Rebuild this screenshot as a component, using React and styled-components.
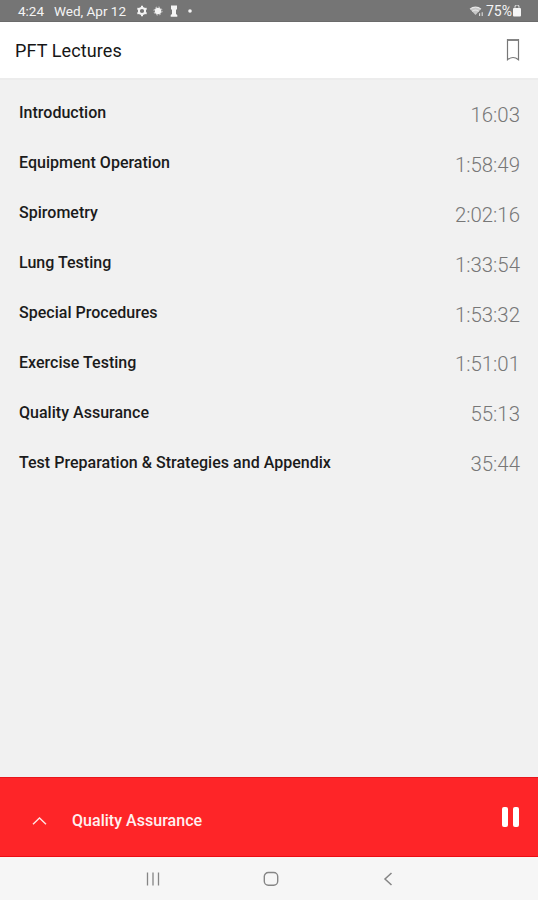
import styled, { createGlobalStyle } from "styled-components"

//DATA
const lectures = [
  { title: "Introduction", time: "16:03" },
  { title: "Equipment Operation", time: "1:58:49" },
  { title: "Spirometry", time: "2:02:16" },
  { title: "Lung Testing", time: "1:33:54" },
  { title: "Special Procedures", time: "1:53:32" },
  { title: "Exercise Testing", time: "1:51:01" },
  { title: "Quality Assurance", time: "55:13" },
  { title: "Test Preparation & Strategies and Appendix", time: "35:44" },
]

function StatusIcons() {

  return (

    <StatusSvg width="60" height="14" viewBox="0 0 60 14">
      {/* settings gear */}
      <circle cx="6" cy="7" r="3.1" fill="none" stroke="#f4f4f4" strokeWidth="2" />
      <path d="M6 1.7v1.8M6 10.5v1.8M1.4 4.35l1.6.9M9 8.75l1.6.9M1.4 9.65l1.6-.9M9 5.25l1.6-.9" stroke="#f4f4f4" strokeWidth="2" />
      {/* brightness */}
      <circle cx="22" cy="7" r="3.2" fill="#f4f4f4" />
      <circle cx="22" cy="7" r="4" fill="none" stroke="#dcdcdc" strokeWidth="1" strokeDasharray="1.6 1.54" />
      {/* chess piece */}
      <path d="M35 1.5h6v3.5l-1 1v4l1.3 1v1.8h-6.6V11l1.3-1V6l-1-1z" fill="#f4f4f4" />
      <circle cx="54" cy="7" r="1.8" fill="#f4f4f4" />
    </StatusSvg>

  )

}

function App() {

  return (

    <Screen>

      <GlobalStyle />

      <StatusBar>
        <Clock>4:24</Clock>
        <DateText>Wed, Apr 12</DateText>
        <StatusIcons />
        <Battery>
          <svg width="16" height="12" viewBox="0 0 16 12">
            <path d="M1.2 4.2a8.4 8.4 0 0 1 10.6 0L6.5 10z" fill="#c8c8c8" />
            <path d="M1 4.2a8.4 8.4 0 0 1 11 0M3.2 6.4a5 5 0 0 1 6.6 0" fill="none" stroke="#e8e8e8" strokeWidth="1.1" />
            <path d="M10.6 8.2v2.8M13.2 7.2v3.8" stroke="#dedede" strokeWidth="1.1" />
          </svg>
          <Percent>75%</Percent>
          <svg width="10" height="12" viewBox="0 0 10 12">
            <path d="M3 2.8V2a2 2 0 0 1 4 0v.8" fill="none" stroke="#d8d8d8" strokeWidth="1.2" />
            <rect x="1" y="3" width="8" height="8.5" rx="1" fill="#f6f6f6" />
          </svg>
        </Battery>
      </StatusBar>

      <Header>
        <HeaderTitle>PFT Lectures</HeaderTitle>
        <svg width="14" height="24" viewBox="0 0 14 24">
          <path d="M1.5 1.5h11v20.3Q7 17.2 1.5 21.8z" fill="none" stroke="#777777" strokeWidth="1.2" />
          <path d="M1.5 2h11" stroke="#858585" strokeWidth="2" />
        </svg>
      </Header>

      <LectureList>
        {lectures.map((lecture) => (
          <LectureRow key={lecture.title}>
            <LectureTitle>{lecture.title}</LectureTitle>
            <LectureTime>{lecture.time}</LectureTime>
          </LectureRow>
        ))}
      </LectureList>

      <Player>
        <svg width="16" height="10" viewBox="0 0 16 10">
          <path d="M1 8.3L7.5 2 14 8.3" fill="none" stroke="#ffe4e4" strokeWidth="1.4" />
        </svg>
        <PlayerTitle>Quality Assurance</PlayerTitle>
        <PauseButton>
          <PauseBar />
          <PauseBar />
        </PauseButton>
      </Player>

      <NavBar>
        <svg width="14" height="14" viewBox="0 0 14 14">
          <path d="M1.5 .5v13M7 .5v13M12.5 .5v13" stroke="#858585" strokeWidth="1.3" />
        </svg>
        <HomeIcon width="16" height="16" viewBox="0 0 16 16">
          <rect x="1.3" y="1.5" width="13.4" height="12.8" rx="4" fill="none" stroke="#858585" strokeWidth="1.4" />
        </HomeIcon>
        <svg width="10" height="14" viewBox="0 0 10 14">
          <path d="M8.5 1L2 7l6.5 6" fill="none" stroke="#858585" strokeWidth="1.5" />
        </svg>
      </NavBar>

    </Screen>

  )

}

export default App

//STYLES

const GlobalStyle = createGlobalStyle`
  * {
    box-sizing: border-box;
  }
  body {
    margin: 0;
    font-family: Roboto, sans-serif;
  }
  svg {
    display: block;
    flex-shrink: 0;
  }
`
const Screen = styled.div`
  display: flex;
  flex-direction: column;
  width: 100%;
  height: 100vh;
  overflow: hidden;
  background-color: #f1f1f1;
`
const StatusBar = styled.div`
  display: flex;
  align-items: center;
  height: 22px;
  padding: 1px 16px 0 18px;
  font-size: 13.5px;
  line-height: 20px;
  color: #f4f4f4;
  background-color: #757575;
  border-bottom: 1px solid #6b6b6b;
`
const Clock = styled.span`
  width: 36px;
`
const DateText = styled.span`
  width: 82px;
  white-space: nowrap;
`
const StatusSvg = styled.svg`
  margin-top: -1px;
`
const Battery = styled.div`
  display: flex;
  align-items: center;
  margin-left: auto;
`
const Percent = styled.span`
  margin-left: 1px;
  font-size: 14px;
`
const Header = styled.div`
  display: flex;
  align-items: center;
  justify-content: space-between;
  height: 58px;
  padding: 0 18px 1px 15px;
  background-color: #ffffff;
  border-bottom: 2px solid #ececec;
`
const HeaderTitle = styled.h1`
  margin: 0;
  padding-top: 2px;
  font-size: 18px;
  font-weight: 400;
  letter-spacing: 0.1px;
  color: #161616;
`
const LectureList = styled.div`
  flex: 1;
  padding: 8px 18px 0 19px;
`
const LectureRow = styled.div`
  display: flex;
  align-items: center;
  justify-content: space-between;
  height: 49.9px;
`
const LectureTitle = styled.span`
  font-size: 16px;
  font-weight: 500;
  letter-spacing: 0.02px;
  color: #1b1b1b;
`
const LectureTime = styled.span`
  padding-top: 4px;
  font-size: 20.4px;
  font-weight: 300;
  color: #777777;
`
const Player = styled.div`
  display: flex;
  align-items: center;
  height: 80px;
  padding: 7px 19px 0 32px;
  background-color: #fe2528;
  border-top: 1px solid #e8161c;
  border-bottom: 1px solid #ec0c12;
`
const PlayerTitle = styled.span`
  margin-left: 24px;
  font-size: 16px;
  font-weight: 500;
  letter-spacing: 0.03px;
  color: #fff0f0;
`
const PauseButton = styled.div`
  display: flex;
  gap: 5px;
  margin: -8px 0 0 auto;
`
const PauseBar = styled.div`
  width: 6px;
  height: 20px;
  border-radius: 2px;
  background-color: #ffffff;
`
const NavBar = styled.div`
  display: flex;
  align-items: center;
  justify-content: space-between;
  height: 43px;
  padding: 0 145px 1px 146px;
  background-color: #f6f6f6;
  border-top: 2px solid #fbf6f2;
`
const HomeIcon = styled.svg`
  margin-right: 2px;
`
